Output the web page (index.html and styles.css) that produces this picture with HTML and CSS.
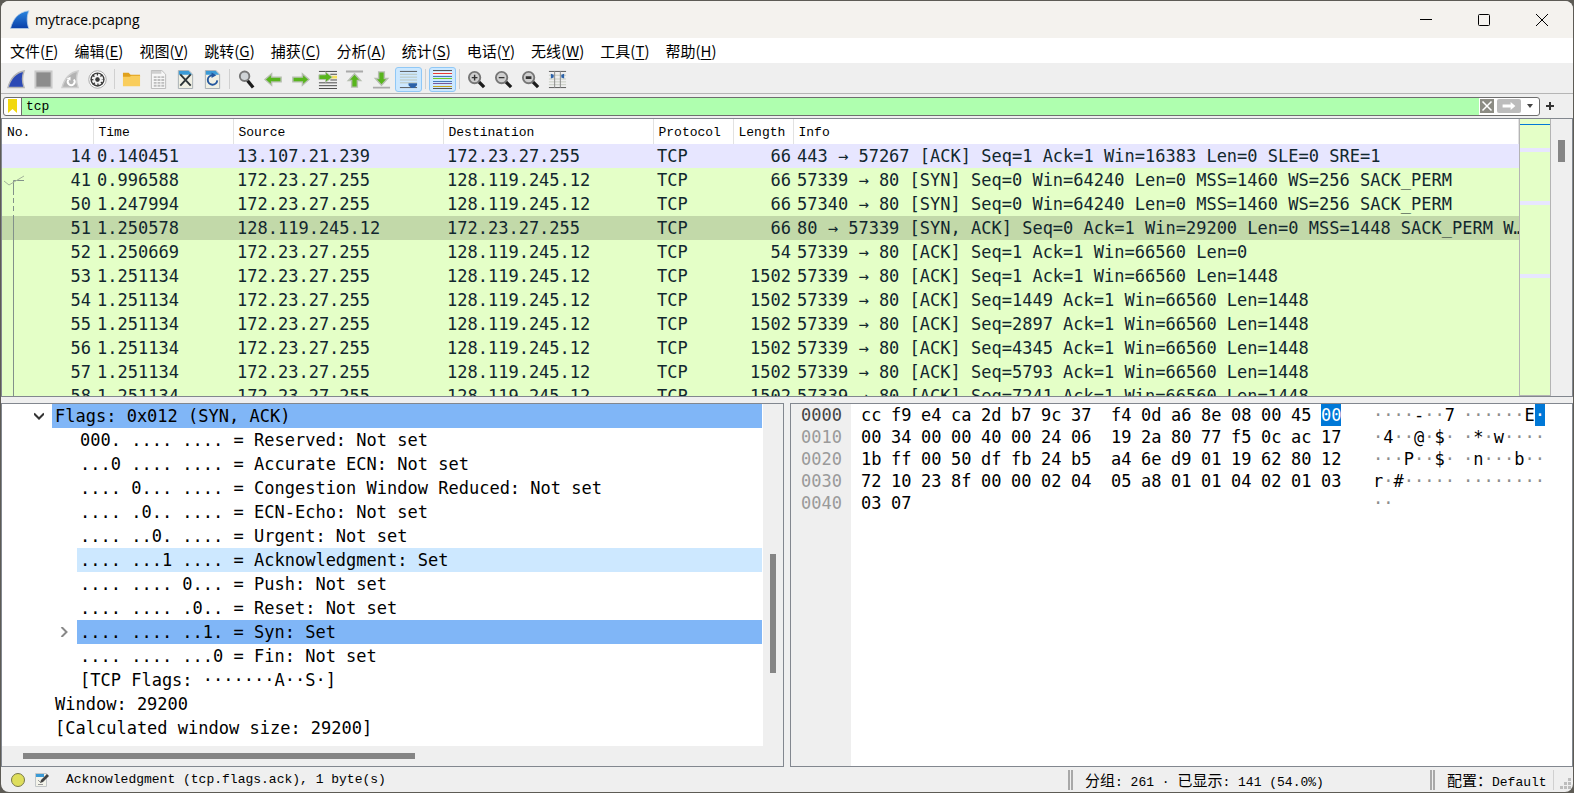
FILE: index.html
```html
<!DOCTYPE html>
<html lang="zh-CN">
<head>
    <meta charset="UTF-8">
    <meta name="viewport" content="width=device-width, initial-scale=1.0">
    <title>mytrace.pcapng</title>
    <link rel="stylesheet" href="styles.css">
</head>
<body>
    <div class="window">
        <header class="titlebar">
            <svg class="app-icon" viewBox="0 0 20 20">
                <defs>
                    <linearGradient id="fin" x1="0" y1="0" x2="0" y2="1">
                        <stop offset="0" stop-color="#2a86e0"/>
                        <stop offset="1" stop-color="#0a3fa8"/>
                    </linearGradient>
                </defs>
                <path d="M.5 18.500C3 9 8 2 19 .7 16.500 6 16.800 13 18.800 18.500z" fill="url(#fin)" stroke="#b9cfe6" stroke-width=".8"/>
            </svg>
            <h1>mytrace.pcapng</h1>
            <div class="window-controls">
                <button aria-label="最小化"><svg viewBox="0 0 12 12"><path d="M0 5.500h12"/></svg></button>
                <button aria-label="最大化"><svg viewBox="0 0 12 12"><rect x=".5" y=".5" width="11" height="11" rx="1"/></svg></button>
                <button aria-label="关闭"><svg viewBox="0 0 12 12"><path d="M0 0l12 12M12 0L0 12"/></svg></button>
            </div>
        </header>

        <nav class="menubar">
            <button>文件(<u>F</u>)</button>
            <button>编辑(<u>E</u>)</button>
            <button>视图(<u>V</u>)</button>
            <button>跳转(<u>G</u>)</button>
            <button>捕获(<u>C</u>)</button>
            <button>分析(<u>A</u>)</button>
            <button>统计(<u>S</u>)</button>
            <button>电话(<u>Y</u>)</button>
            <button>无线(<u>W</u>)</button>
            <button>工具(<u>T</u>)</button>
            <button>帮助(<u>H</u>)</button>
        </nav>

        <div class="toolbar">
            <button aria-label="开始捕获"><svg viewBox="0 0 20 20"><path d="M1 18.500C4 8 9 2.500 18 1c-2 5-2 12 0 17.500z" fill="#2b49b5" stroke="#b4b4b4" stroke-width="1.500"/></svg></button>
            <button aria-label="停止捕获"><svg viewBox="0 0 20 20"><rect x="1.500" y="1.500" width="17" height="17" fill="#8c8c8c" stroke="#c9c9c9" stroke-width="2"/></svg></button>
            <button aria-label="重新开始捕获"><svg viewBox="0 0 20 20"><path d="M1 18.500C4 8 9 2.500 18 1c-2 5-2 12 0 17.500z" fill="#b3b3b3" stroke="#cfcfcf" stroke-width="1.500"/><path d="M8 10a3.600 3.600 0 1 0 5.500 0" fill="none" stroke="#fff" stroke-width="2"/><path d="M6 9l4-2v4z" fill="#fff"/></svg></button>
            <button aria-label="捕获选项"><svg viewBox="0 0 20 20"><circle cx="10" cy="10" r="9.200" fill="#fff" stroke="#a9a9a9"/><circle cx="10" cy="10" r="7.500" fill="#3a3a3a"/><circle cx="10" cy="10" r="4.500" fill="none" stroke="#f2f2f2" stroke-width="3" stroke-dasharray="2.300 1.234"/><circle cx="10" cy="10" r="3.300" fill="none" stroke="#f2f2f2" stroke-width="2"/><circle cx="10" cy="10" r="2" fill="#3a3a3a"/></svg></button>
            <i class="sep"></i>
            <button aria-label="打开"><svg viewBox="0 0 20 20"><path d="M1 3h6l2 2h10v3H1z" fill="#e0a11d"/><path d="M1 7h7l2-1h9v11H1z" fill="#f9cd5c"/></svg></button>
            <button aria-label="保存"><svg viewBox="0 0 20 20"><path d="M2.500.5h11l4 4v15h-15z" fill="#f6f6f6" stroke="#b9b9b9"/><path d="M3 1h10v3H3z" fill="#cfcfcf"/><path d="M5 7.500h3m1 0h3m1 0h3M5 10.500h3m1 0h3m1 0h3M5 13.500h3m1 0h3m1 0h3M5 16.500h3m1 0h3m1 0h3" stroke="#bdbdbd" stroke-width="2"/></svg></button>
            <button aria-label="关闭文件"><svg viewBox="0 0 20 20"><path d="M2.500.5h11l4 4v15h-15z" fill="#f0f0e4" stroke="#a7aeb3"/><path d="M3 1h10.500l3.500 4H3z" fill="#3b9ad6"/><path d="M4.500 4.500l11 12M15.500 4.500l-11 12" stroke="#2d3538" stroke-width="2"/></svg></button>
            <button aria-label="重新加载"><svg viewBox="0 0 20 20"><path d="M2.500.5h11l4 4v15h-15z" fill="#f0f0e4" stroke="#a7aeb3"/><path d="M3 1h10.500l3.500 4H3z" fill="#3b9ad6"/><path d="M10 5.500a5 5 0 1 0 5 5.500" fill="none" stroke="#24579e" stroke-width="2"/><path d="M9 2.500l5 3-5 3z" fill="#24579e"/></svg></button>
            <i class="sep"></i>
            <button aria-label="查找"><svg viewBox="0 0 20 20"><path d="M11 11l6 7.500" stroke="#1c1c1c" stroke-width="3.500"/><circle cx="8" cy="6.500" r="5" fill="#cfd3d6" stroke="#777" stroke-width="2"/></svg></button>
            <button aria-label="上一分组"><svg viewBox="0 0 20 20"><path d="M1 10l7-6v3.500h10v5H8V16z" fill="#58b51d" stroke="#b6beb0" stroke-width="1.500"/></svg></button>
            <button aria-label="下一分组"><svg viewBox="0 0 20 20"><path d="M19 10l-7-6v3.500H2v5h10V16z" fill="#58b51d" stroke="#b6beb0" stroke-width="1.500"/></svg></button>
            <button aria-label="转到分组"><svg viewBox="0 0 20 20"><path d="M1 1.500h19M13 4.500h7M13 10.500h7M1 13.500h19M1 16.500h19M1 19.500h19" stroke="#444"/><path d="M13 6h7v3h-7z" fill="#f5e05c"/><path d="M15 7.500L8 2v3H1v5h7v3z" fill="#58b51d" stroke="#b6beb0"/></svg></button>
            <button aria-label="首个分组"><svg viewBox="0 0 20 20"><path d="M1 1.500h18" stroke="#aaa" stroke-width="2"/><path d="M10 4l6.500 7H13v7H7v-7H3.500z" fill="#58b51d" stroke="#b6beb0" stroke-width="1.500"/></svg></button>
            <button aria-label="最新分组"><svg viewBox="0 0 20 20"><path d="M1 18.500h18" stroke="#aaa" stroke-width="2"/><path d="M10 16L3.500 9H7V2h6v7h3.500z" fill="#58b51d" stroke="#b6beb0" stroke-width="1.500"/></svg></button>
            <button class="on" aria-label="自动滚动" aria-pressed="true"><svg viewBox="0 0 20 20"><path d="M1 1.500h18M1 18.500h18" stroke="#555"/><path d="M1 4.500h18M1 7.500h18M1 10.500h18M1 13.500h18" stroke="#bcc3b4"/><path d="M10 14h9v2l-3 3h-3l-3-3z" fill="#2c62a8"/></svg></button>
            <i class="sep"></i>
            <button class="on" aria-label="着色" aria-pressed="true"><svg viewBox="0 0 19 19"><path d="M0 .5h19M0 18.500h19" stroke="#555"/><path d="M0 2.500h19M0 4.500h19" stroke="#f4f4f4"/><path d="M0 3.500h19" stroke="#e33b3b"/><path d="M0 6.500h19" stroke="#4a78b8"/><path d="M0 8.500h19" stroke="#70cc28"/><path d="M0 11.500h19" stroke="#4a78b8"/><path d="M0 13.500h19" stroke="#77589a"/><path d="M0 16.500h19" stroke="#c8a21a"/></svg></button>
            <i class="sep"></i>
            <button aria-label="放大"><svg viewBox="0 0 20 20"><path d="M12 12l6 6" stroke="#1c1c1c" stroke-width="3.500"/><circle cx="8" cy="8" r="6" fill="#cfcfcf" stroke="#777" stroke-width="2"/><path d="M5 8h6M8 5v6" stroke="#333" stroke-width="1.500"/></svg></button>
            <button aria-label="缩小"><svg viewBox="0 0 20 20"><path d="M12 12l6 6" stroke="#1c1c1c" stroke-width="3.500"/><circle cx="8" cy="8" r="6" fill="#cfcfcf" stroke="#777" stroke-width="2"/><path d="M5 8h6" stroke="#333" stroke-width="1.500"/></svg></button>
            <button aria-label="正常大小"><svg viewBox="0 0 20 20"><path d="M12 12l6 6" stroke="#1c1c1c" stroke-width="3.500"/><circle cx="8" cy="8" r="6" fill="#cfcfcf" stroke="#777" stroke-width="2"/><path d="M5 8h6" stroke="#333" stroke-width="3"/></svg></button>
            <button aria-label="调整列宽"><svg viewBox="0 0 20 20"><path d="M1 1.500h18M1 18.500h18" stroke="#555"/><path d="M1 5.500h18M1 9.500h18M1 12.500h18M1 15.500h18" stroke="#c6cbc0"/><path d="M7 1v18M13 1v18" stroke="#888"/><path d="M3 4v5l3-1V5zM17 4v5l-3-1V5z" fill="#2c62a8"/></svg></button>
        </div>

        <form class="filterbar">
            <div class="filter-box">
                <button type="button" class="bookmark" aria-label="书签"><svg viewBox="0 0 9 14"><path d="M0 0h9v14l-4.500-4L0 14z" fill="#f2d80c"/></svg></button>
                <input type="text" value="tcp" aria-label="显示过滤器">
                <button type="button" class="clear" aria-label="清除"><svg viewBox="0 0 14 14"><path d="M2.500 2.500l9 9M11.500 2.500l-9 9" stroke="#fff" stroke-width="1.500"/></svg></button>
                <button type="button" class="apply" aria-label="应用"><svg viewBox="0 0 18 10"><path d="M1 5h11" stroke="#fff" stroke-width="4"/><path d="M11 0l6 5-6 5z" fill="#fff"/></svg></button>
                <button type="button" class="recent" aria-label="最近"><svg viewBox="0 0 6 4"><path d="M0 0h6L3 4z" fill="#444"/></svg></button>
            </div>
            <button type="button" class="add" aria-label="添加"><svg viewBox="0 0 8 8"><path d="M4 0v8M0 4h8" stroke="#333" stroke-width="2"/></svg></button>
        </form>

        <main class="panes">
            <section class="packet-list">
                <div class="packet-scroll">
                    <table class="packets-table">
                        <colgroup>
                            <col class="c-no"><col class="c-time"><col class="c-addr"><col class="c-addr"><col class="c-proto"><col class="c-len"><col>
                        </colgroup>
                        <thead>
                            <tr><th>No.</th><th>Time</th><th>Source</th><th>Destination</th><th>Protocol</th><th>Length</th><th>Info</th></tr>
                        </thead>
                        <tbody>
                            <tr class="udp"><td>14</td><td>0.140451</td><td>13.107.21.239</td><td>172.23.27.255</td><td>TCP</td><td>66</td><td>443 → 57267 [ACK] Seq=1 Ack=1 Win=16383 Len=0 SLE=0 SRE=1</td></tr>
                            <tr><td>41</td><td>0.996588</td><td>172.23.27.255</td><td>128.119.245.12</td><td>TCP</td><td>66</td><td>57339 → 80 [SYN] Seq=0 Win=64240 Len=0 MSS=1460 WS=256 SACK_PERM</td></tr>
                            <tr><td>50</td><td>1.247994</td><td>172.23.27.255</td><td>128.119.245.12</td><td>TCP</td><td>66</td><td>57340 → 80 [SYN] Seq=0 Win=64240 Len=0 MSS=1460 WS=256 SACK_PERM</td></tr>
                            <tr class="selected"><td>51</td><td>1.250578</td><td>128.119.245.12</td><td>172.23.27.255</td><td>TCP</td><td>66</td><td>80 → 57339 [SYN, ACK] Seq=0 Ack=1 Win=29200 Len=0 MSS=1448 SACK_PERM W…</td></tr>
                            <tr><td>52</td><td>1.250669</td><td>172.23.27.255</td><td>128.119.245.12</td><td>TCP</td><td>54</td><td>57339 → 80 [ACK] Seq=1 Ack=1 Win=66560 Len=0</td></tr>
                            <tr><td>53</td><td>1.251134</td><td>172.23.27.255</td><td>128.119.245.12</td><td>TCP</td><td>1502</td><td>57339 → 80 [ACK] Seq=1 Ack=1 Win=66560 Len=1448</td></tr>
                            <tr><td>54</td><td>1.251134</td><td>172.23.27.255</td><td>128.119.245.12</td><td>TCP</td><td>1502</td><td>57339 → 80 [ACK] Seq=1449 Ack=1 Win=66560 Len=1448</td></tr>
                            <tr><td>55</td><td>1.251134</td><td>172.23.27.255</td><td>128.119.245.12</td><td>TCP</td><td>1502</td><td>57339 → 80 [ACK] Seq=2897 Ack=1 Win=66560 Len=1448</td></tr>
                            <tr><td>56</td><td>1.251134</td><td>172.23.27.255</td><td>128.119.245.12</td><td>TCP</td><td>1502</td><td>57339 → 80 [ACK] Seq=4345 Ack=1 Win=66560 Len=1448</td></tr>
                            <tr><td>57</td><td>1.251134</td><td>172.23.27.255</td><td>128.119.245.12</td><td>TCP</td><td>1502</td><td>57339 → 80 [ACK] Seq=5793 Ack=1 Win=66560 Len=1448</td></tr>
                            <tr><td>58</td><td>1.251134</td><td>172.23.27.255</td><td>128.119.245.12</td><td>TCP</td><td>1502</td><td>57339 → 80 [ACK] Seq=7241 Ack=1 Win=66560 Len=1448</td></tr>
                        </tbody>
                    </table>
                    <!-- conversation marker over the No. column -->
                    <svg class="related" viewBox="0 0 24 224"><path d="M22 8.500H11.500V23M11.500 43v181"/><path d="M11.500 26v15" stroke-dasharray="5 3"/><path d="M2 9l5 4L22 4" class="tick"/></svg>
                </div>
                <div class="minimap">
                    <i class="mark current"></i>
                    <i class="mark m1"></i>
                    <i class="mark m2"></i>
                    <i class="mark m3"></i>
                </div>
                <div class="scroll-v list-scroll"><i></i></div>
            </section>

            <div class="lower">
                <section class="details">
                    <div class="tree-row">
                        <ul class="tree">
                            <li class="lvl1 field"><button aria-label="折叠"><svg viewBox="0 0 10 10"><path d="M0 2.500l5 5 5-5" stroke="#333"/></svg></button><span>Flags: 0x012 (SYN, ACK)</span></li>
                            <li class="lvl2"><span>000. .... .... = Reserved: Not set</span></li>
                            <li class="lvl2"><span>...0 .... .... = Accurate ECN: Not set</span></li>
                            <li class="lvl2"><span>.... 0... .... = Congestion Window Reduced: Not set</span></li>
                            <li class="lvl2"><span>.... .0.. .... = ECN-Echo: Not set</span></li>
                            <li class="lvl2"><span>.... ..0. .... = Urgent: Not set</span></li>
                            <li class="lvl2 hover"><span>.... ...1 .... = Acknowledgment: Set</span></li>
                            <li class="lvl2"><span>.... .... 0... = Push: Not set</span></li>
                            <li class="lvl2"><span>.... .... .0.. = Reset: Not set</span></li>
                            <li class="lvl2 field"><button aria-label="展开"><svg viewBox="0 0 10 10"><path d="M2.500 0l5 5-5 5" stroke="#888"/></svg></button><span>.... .... ..1. = Syn: Set</span></li>
                            <li class="lvl2"><span>.... .... ...0 = Fin: Not set</span></li>
                            <li class="lvl2"><span>[TCP Flags: ·······A··S·]</span></li>
                            <li class="lvl1"><span>Window: 29200</span></li>
                            <li class="lvl1"><span>[Calculated window size: 29200]</span></li>
                        </ul>
                        <div class="scroll-v tree-scroll"><i></i></div>
                    </div>
                    <div class="scroll-h"><i></i></div>
                </section>

                <section class="bytes">
                    <pre class="offsets"><b>0000</b>
0010
0020
0030
0040</pre>
                    <table class="hex">
                        <tr><td>cc</td><td>f9</td><td>e4</td><td>ca</td><td>2d</td><td>b7</td><td>9c</td><td>37</td><td class="half"></td><td>f4</td><td>0d</td><td>a6</td><td>8e</td><td>08</td><td>00</td><td>45</td><td><mark>00</mark></td></tr>
                        <tr><td>00</td><td>34</td><td>00</td><td>00</td><td>40</td><td>00</td><td>24</td><td>06</td><td></td><td>19</td><td>2a</td><td>80</td><td>77</td><td>f5</td><td>0c</td><td>ac</td><td>17</td></tr>
                        <tr><td>1b</td><td>ff</td><td>00</td><td>50</td><td>df</td><td>fb</td><td>24</td><td>b5</td><td></td><td>a4</td><td>6e</td><td>d9</td><td>01</td><td>19</td><td>62</td><td>80</td><td>12</td></tr>
                        <tr><td>72</td><td>10</td><td>23</td><td>8f</td><td>00</td><td>00</td><td>02</td><td>04</td><td></td><td>05</td><td>a8</td><td>01</td><td>01</td><td>04</td><td>02</td><td>01</td><td>03</td></tr>
                        <tr><td>03</td><td>07</td></tr>
                    </table>
                    <pre class="ascii">····<b>-</b>··<b>7</b>
·<b>4</b>··<b>@</b>·<b>$</b>·
···<b>P</b>··<b>$</b>·
<b>r</b>·<b>#</b>·····
··</pre>
                    <pre class="ascii">······<b>E</b><mark>·</mark>
·<b>*</b>·<b>w</b>····
·<b>n</b>···<b>b</b>··
········</pre>
                </section>
            </div>
        </main>

        <footer class="statusbar">
            <button aria-label="专家信息"><svg viewBox="0 0 14 14"><circle cx="7" cy="7" r="6.500" fill="#dede5c" stroke="#77774a"/></svg></button>
            <button aria-label="捕获文件属性"><svg viewBox="0 0 14 14"><path d="M.5.5h11v13H.5z" fill="#f3f3ea" stroke="#c2c6c8"/><path d="M1 1h8v3H1z" fill="#3b9ad6"/><path d="M3 7l2 2M3 11.500h5" stroke="#999"/><path d="M5 10l1-3 6-6 2 2-6 6z" fill="#444"/></svg></button>
            <span class="message">Acknowledgment (tcp.flags.ack), 1 byte(s)</span>
            <span class="packets"><span class="cjk">分组</span>: 261 · <span class="cjk">已显示</span>: 141 (54.0%)</span>
            <span class="profile"><span class="cjk">配置：</span>Default</span>
            <svg class="grip" viewBox="0 0 12 12"><path d="M9 0h3v3H9zM5 4h3v3H5zM9 4h3v3H9zM1 8h3v3H1zM5 8h3v3H5zM9 8h3v3H9z" fill="#bdbdbd"/></svg>
        </footer>
    </div>
</body>
</html>
```
FILE: styles.css
```css
* {
    box-sizing: border-box;
}

body {
    margin: 0;
    height: 100vh;
    padding: 1px;
    background: #5d5b55;
    color: #000;
    overflow: hidden;
}

button {
    display: flex;
    align-items: center;
    justify-content: center;
    padding: 0;
    border: 0;
    background: none;
    color: inherit;
    font: inherit;
}

.window {
    display: flex;
    flex-direction: column;
    height: 100%;
    border-radius: 8px;
    background: #efefef;
    overflow: hidden;
}

/* title bar */
.titlebar {
    display: flex;
    align-items: center;
    height: 37px;
    padding: 0 2px 0 9px;
    gap: 5px;
    background: #f4f2ee;
}

.app-icon {
    width: 20px;
    height: 20px;
}

.titlebar h1 {
    flex: 1;
    margin: 0;
    font: 14px "Open Sans", "Noto Sans", sans-serif;
}

.window-controls {
    display: flex;
}

.window-controls button {
    width: 58px;
    height: 37px;
}

.window-controls svg {
    width: 12px;
    height: 12px;
    fill: none;
    stroke: #000;
    overflow: visible;
}

/* menu */
.menubar {
    display: flex;
    height: 27px;
    padding-left: 9px;
    gap: 16px;
    background: #fff;
    border-bottom: 2px solid #efefef;
    font: 15px "Noto Sans CJK SC", sans-serif;
}

.menubar u {
    text-underline-offset: 2px;
}

/* tool bar */
.toolbar {
    display: flex;
    align-items: center;
    height: 29px;
    padding-left: 2px;
    border-bottom: 1px solid #b5b5b5;
}

.toolbar button {
    width: 27px;
    height: 25px;
    border: 1px solid transparent;
    border-radius: 3px;
}

.toolbar .on {
    border-color: #90c8f6;
    background: #cce8ff;
}

.toolbar svg {
    width: 19px;
    height: 19px;
}

.sep {
    width: 1px;
    height: 20px;
    margin: 0 3px;
    background: #d0d0d0;
}

/* display filter */
.filterbar {
    display: flex;
    align-items: center;
    height: 24px;
    padding: 0 19px 0 2px;
    gap: 6px;
}

.filter-box {
    display: flex;
    align-items: center;
    flex: 1;
    height: 19px;
    border: 1px solid #6e6e6e;
    border-radius: 3px;
    background: #fff;
}

.bookmark {
    width: 18px;
    height: 17px;
    border-right: 1px solid #6e6e6e;
}

.bookmark svg {
    width: 9px;
    height: 14px;
}

.filter-box input {
    flex: 1;
    height: 17px;
    padding: 0 4px;
    border: 0;
    outline: 0;
    background: #afffaf;
    font: 13px "Liberation Mono", monospace;
}

.clear {
    width: 14px;
    height: 14px;
    margin-left: 1px;
    background: #8c8c84;
}

.clear svg {
    width: 14px;
    height: 14px;
}

.apply {
    width: 24px;
    height: 14px;
    margin-left: 3px;
    border-radius: 2px;
    background: #bcbcbc;
}

.apply svg {
    width: 18px;
    height: 8px;
}

.recent {
    width: 18px;
}

.recent svg {
    width: 6px;
    height: 4px;
}

.add svg {
    width: 8px;
    height: 8px;
}

/* panes */
.panes {
    display: grid;
    grid-template-rows: 279fr 364fr;
    gap: 6px;
    flex: 1;
    min-height: 0;
    font: 17px/24px "DejaVu Sans Mono", "Liberation Mono", monospace;
}

.packet-list {
    display: flex;
    min-height: 0;
    border: 1px solid #82878f;
    overflow: hidden;
}

.packet-scroll {
    position: relative;
    flex: 1;
    background: #fff;
    overflow: hidden;
}

.packets-table {
    width: 100%;
    table-layout: fixed;
    border-collapse: collapse;
}

.c-no {
    width: 91px;
}

.c-time {
    width: 140px;
}

.c-addr {
    width: 210px;
}

.c-proto {
    width: 80px;
}

.c-len {
    width: 60px;
}

th {
    height: 25px;
    padding: 2px 0 0 5px;
    border-right: 1px solid #e2e2e2;
    font: 13px "Liberation Mono", monospace;
    text-align: left;
}

.packets-table td {
    height: 24px;
    padding: 0 0 0 4px;
    white-space: nowrap;
}

.packets-table tbody tr {
    background: #e4ffc7;
    color: #12272e;
}

.packets-table td:nth-child(1),
.packets-table td:nth-child(6) {
    padding: 0 2px 0 0;
    text-align: right;
}

.packets-table .udp {
    background: #e7e6ff;
}

.packets-table .selected {
    background: #c2d9a9;
}

.related {
    position: absolute;
    left: 0;
    top: 53px;
    width: 24px;
    height: 224px;
    fill: none;
    stroke: #82918a;
}

.related .tick {
    stroke: #a3b39a;
}

.minimap {
    position: relative;
    width: 32px;
    border: 1px solid #b4b4b4;
    border-top: 0;
    background: #e4ffc7;
}

.mark {
    position: absolute;
    left: 0;
    right: 0;
    height: 4px;
    background: #e7e6ff;
}

.minimap .current {
    top: 5px;
    height: 1px;
    background: #0078d7;
}

.m1 {
    top: 29px;
}

.m2 {
    top: 82px;
}

.m3 {
    top: 155px;
}

.scroll-v {
    background: #efefef;
}

.scroll-v i,
.scroll-h i {
    display: block;
    background: #858585;
}

.list-scroll {
    width: 21px;
    padding: 21px 7px;
}

.list-scroll i {
    height: 22px;
}

.lower {
    display: grid;
    grid-template-columns: 1fr 1fr;
    gap: 6px;
    min-height: 0;
}

.details,
.bytes {
    display: flex;
    min-width: 0;
    min-height: 0;
    border: 1px solid #82878f;
    overflow: hidden;
}

.details {
    flex-direction: column;
}

.tree-row {
    display: flex;
    flex: 1;
    min-height: 0;
    background: #fff;
}

.tree {
    flex: 1;
    margin: 0;
    padding: 0 1px 0 0;
    list-style: none;
    white-space: nowrap;
    overflow: hidden;
}

.tree li {
    display: flex;
    height: 24px;
}

.tree button {
    width: 26px;
}

.tree svg {
    width: 10px;
    height: 10px;
    fill: none;
    stroke-width: 2;
}

.tree span {
    flex: 1;
    padding-left: 3px;
}

.lvl1 {
    padding-left: 50px;
}

.lvl2 {
    padding-left: 75px;
}

.lvl1.field {
    padding-left: 24px;
}

.lvl2.field {
    padding-left: 49px;
}

.field span {
    background: #80b6f7;
}

.hover span {
    background: #cde8ff;
}

.tree-scroll {
    width: 20px;
    padding: 150px 7px 0;
}

.tree-scroll i {
    height: 119px;
}

.scroll-h {
    height: 20px;
    padding: 7px 21px;
    background: #efefef;
}

.scroll-h i {
    width: 53%;
    height: 6px;
}

.bytes {
    align-items: flex-start;
    background: #fff;
    line-height: 22px;
}

.bytes pre {
    margin: 0;
    font: inherit;
}

.bytes b {
    font-weight: normal;
}

.bytes mark {
    display: inline-block;
    background: #0078d7;
    color: #fff;
}

.bytes .offsets {
    align-self: stretch;
    flex: 0 0 60px;
    padding-left: 10px;
    background: #efefef;
    color: #9a9a9a;
}

.offsets b {
    color: #444;
}

.hex {
    flex: 0 0 490px;
    width: 490px;
    margin-left: 10px;
    table-layout: fixed;
    border-collapse: collapse;
}

.hex td {
    height: 22px;
    padding: 0;
}

.hex .half {
    width: 10px;
}

.bytes .ascii {
    flex: 0 0 90px;
    color: #8c8c8c;
}

.hex + .ascii {
    margin-left: 22px;
}

.bytes .ascii b {
    color: #000;
}

/* status bar */
.statusbar {
    display: flex;
    align-items: center;
    height: 25px;
    padding: 0 2px 0 10px;
    font: 13px "Liberation Mono", monospace;
}

.statusbar button {
    width: 14px;
    margin-right: 10px;
}

.statusbar button svg {
    width: 14px;
    height: 14px;
}

.cjk {
    font: 15px/20px "Noto Sans CJK SC", sans-serif;
}

.message {
    flex: 1;
    padding-left: 7px;
}

.packets,
.profile {
    height: 20px;
    padding-left: 12px;
    border-left: 5px double #a8a8a8;
    line-height: 20px;
    white-space: nowrap;
}

.packets {
    width: 362px;
}

.profile {
    width: 124px;
    border-right: 1px solid #d0d0d0;
}

.grip {
    align-self: flex-end;
    width: 12px;
    height: 12px;
    margin: 0 0 2px 5px;
}
```
